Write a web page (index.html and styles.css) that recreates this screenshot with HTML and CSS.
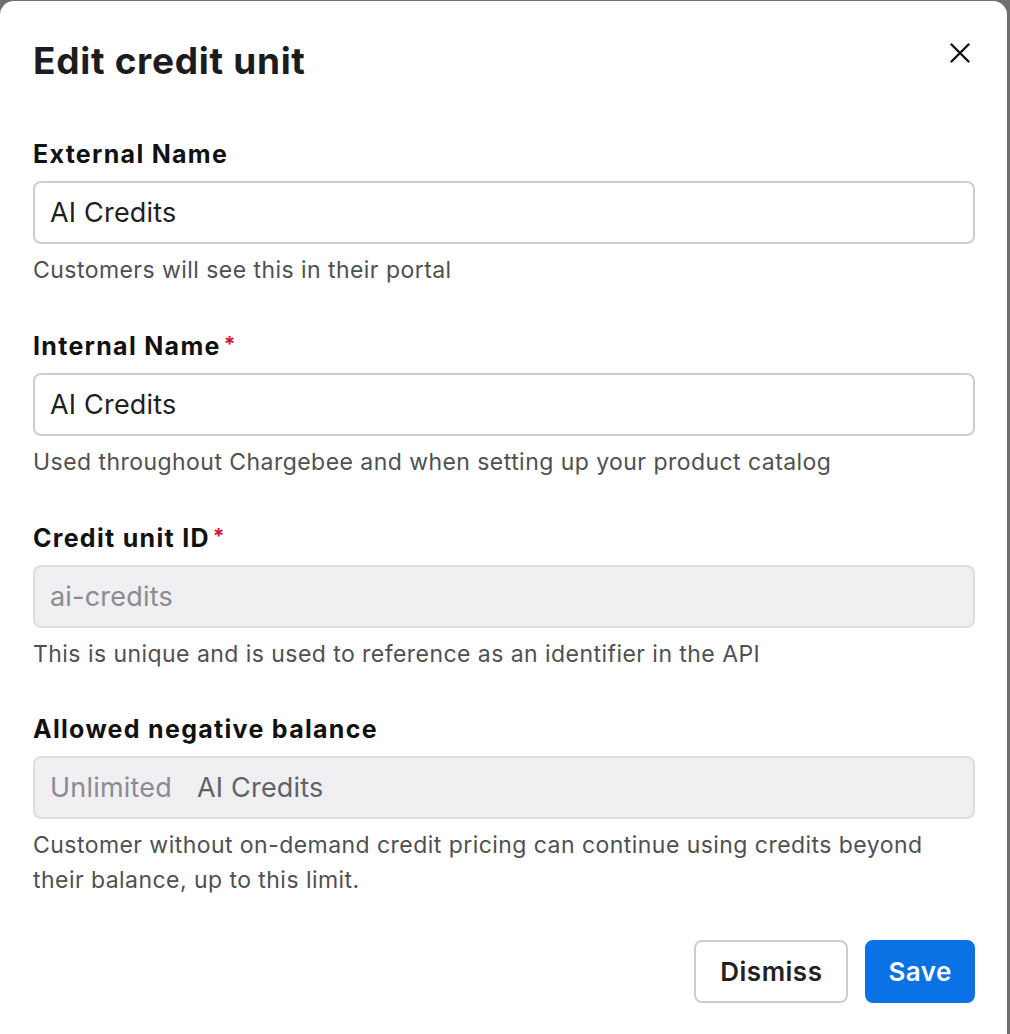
FILE: index.html
```html
<!DOCTYPE html>
<html lang="en">
<head>
  <meta charset="UTF-8" />
  <title>Edit credit unit</title>
  <link rel="stylesheet" href="styles.css">
</head>
<body>
  <div class="modal">
    <div class="modal-header">
      <h1>Edit credit unit</h1>
      <button class="close-btn" aria-label="Close">
        <svg width="20" height="20" viewBox="0 0 20 20">
          <path d="M1.5 1.5 L18.5 18.5 M18.5 1.5 L1.5 18.5" stroke="#111" stroke-width="2.4" stroke-linecap="round" fill="none"/>
        </svg>
      </button>
    </div>

    <div class="field">
      <label for="extName">External Name</label>
      <input type="text" id="extName" value="AI Credits" />
      <p class="hint">Customers will see this in their portal</p>
    </div>

    <div class="field">
      <label for="intName">Internal Name<span class="req">*</span></label>
      <input type="text" id="intName" value="AI Credits" />
      <p class="hint">Used throughout Chargebee and when setting up your product catalog</p>
    </div>

    <div class="field">
      <label for="unitId">Credit unit ID<span class="req">*</span></label>
      <input type="text" id="unitId" value="ai-credits" disabled />
      <p class="hint">This is unique and is used to reference as an identifier in the API</p>
    </div>

    <div class="field">
      <label>Allowed negative balance</label>
      <div class="input-box disabled">
        <span class="placeholder">Unlimited</span>
        <span class="suffix">AI Credits</span>
      </div>
      <p class="hint">Customer without on-demand credit pricing can continue using credits beyond their balance, up to this limit.</p>
    </div>

    <div class="modal-footer">
      <button class="btn btn-secondary">Dismiss</button>
      <button class="btn btn-primary">Save</button>
    </div>
  </div>
</body>
</html>
```

FILE: styles.css
```css
body {
  margin: 0;
  background: #6f6f6f;
  font-family: Inter, 'Noto Sans', sans-serif;
  color: #1c1c1e;
  overflow: hidden;
}
.modal {
  background: #fff;
  margin: 1px 3px 0 0;
  border-radius: 14px;
  min-height: 1060px;
  padding: 38px 32px 0 33px;
  box-sizing: border-box;
}
.modal-header {
  display: flex;
  justify-content: space-between;
  align-items: flex-start;
  margin-bottom: 56px;
}
h1 {
  margin: 0;
  font-size: 37px;
  line-height: 44px;
  font-weight: 700;
  letter-spacing: 0.7px;
  color: #1c1c1e;
}
.close-btn {
  background: none;
  border: none;
  padding: 0;
  margin: 4px 5px 0 0;
  cursor: pointer;
  line-height: 0;
}
.field {
  margin-bottom: 42px;
}
.field label {
  display: block;
  font-size: 25px;
  line-height: 30px;
  font-weight: 700;
  letter-spacing: 1.3px;
  color: #111;
  margin-bottom: 12px;
}
.req {
  color: #d4132a;
  font-size: 21px;
  margin-left: 3px;
  vertical-align: 3px;
}
.field input,
.input-box {
  display: block;
  width: 100%;
  box-sizing: border-box;
  height: 63px;
  padding: 0 15px;
  font-family: inherit;
  font-size: 27px;
  letter-spacing: 0.2px;
  color: #1f1f21;
  border: 2px solid #cdcdd0;
  border-radius: 8px;
  background: #fff;
  outline: none;
}
.field input:disabled {
  background: #f0f0f2;
  border-color: #dedee1;
  color: #8b8b90;
}
.input-box {
  display: flex;
  align-items: center;
  gap: 25px;
}
.input-box.disabled {
  background: #f0f0f2;
  border-color: #dedee1;
}
.placeholder {
  color: #8b8b90;
}
.suffix {
  color: #626266;
}
.hint {
  margin: 9px 0 0;
  font-size: 23px;
  line-height: 35px;
  color: #505053;
  letter-spacing: 0.45px;
}
.modal-footer {
  display: flex;
  justify-content: flex-end;
  gap: 17px;
}
.btn {
  height: 63px;
  font-family: inherit;
  font-size: 26px;
  font-weight: 600;
  letter-spacing: 0.5px;
  border-radius: 8px;
  cursor: pointer;
}
.btn-secondary {
  padding: 0 24px;
  background: #fff;
  color: #222;
  border: 2px solid #cdcdd0;
}
.btn-primary {
  padding: 0 21px;
  background: #0b72e5;
  color: #fff;
  border: 2px solid #0b72e5;
}
```
